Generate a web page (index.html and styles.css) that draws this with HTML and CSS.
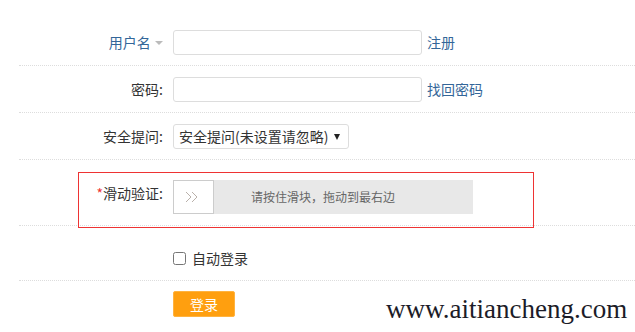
FILE: index.html
```html
<!DOCTYPE html>
<html lang="zh-CN">
<head>
    <meta charset="UTF-8">
    <meta name="viewport" content="width=device-width, initial-scale=1.0">
    <title>登录</title>
    <link rel="stylesheet" href="styles.css">
</head>
<body>

    <div class="login-form">
        <!-- 用户名 -->
        <div class="row">
            <div class="label label-link">用户名 <span class="caret"></span></div>
            <input type="text" class="text-input">
            <a class="side-link" href="#">注册</a>
        </div>

        <!-- 密码 -->
        <div class="row">
            <div class="label">密码:</div>
            <input type="password" class="text-input">
            <a class="side-link" href="#">找回密码</a>
        </div>

        <!-- 安全提问 -->
        <div class="row">
            <div class="label">安全提问:</div>
            <span class="select-wrap">
                <select class="select-input">
                    <option>安全提问(未设置请忽略)</option>
                </select>
            </span>
        </div>

        <!-- 滑动验证 -->
        <div class="row row-slide">
            <div class="label"><span class="required">*</span>滑动验证:</div>
            <div class="slider">
                <div class="slider-handle">
                    <svg width="14" height="12" viewBox="0 0 14 12">
                        <path d="M1 1 L6 6 L1 11 M7 1 L12 6 L7 11" fill="none" stroke="#b9b0aa" stroke-width="1"/>
                    </svg>
                </div>
                <div class="slider-text">请按住滑块，拖动到最右边</div>
            </div>
            <!-- error highlight -->
            <div class="error-box"></div>
        </div>

        <!-- 自动登录 -->
        <div class="row row-check">
            <div class="label"></div>
            <label class="check"><input type="checkbox"> 自动登录</label>
        </div>

        <!-- 登录按钮 -->
        <div class="row row-submit">
            <div class="label"></div>
            <button type="submit" class="btn-login">登录</button>
        </div>
    </div>

    <div class="watermark">www.aitiancheng.com</div>

</body>
</html>
```

FILE: styles.css
```css
* {
    margin: 0;
    padding: 0;
    box-sizing: border-box;
}

body {
    background: #fff;
    font-family: "Noto Sans CJK SC", "Liberation Sans", sans-serif;
    font-size: 14px;
    color: #333;
    width: 635px;
    height: 332px;
    overflow: hidden;
    position: relative;
}

.login-form {
    padding: 19px 0 0 19px;
}

/* each form line with a dotted separator */
.row {
    display: flex;
    align-items: center;
    height: 47px;
    border-bottom: 1px dotted #ddd;
    position: relative;
}

.label {
    width: 154px;
    padding-right: 10px;
    text-align: right;
    line-height: 20px;
    flex-shrink: 0;
}

.label-link {
    color: #336699;
    padding-right: 10px;
}

.caret {
    display: inline-block;
    width: 0;
    height: 0;
    border-left: 4px solid transparent;
    border-right: 4px solid transparent;
    border-top: 4px solid #bbb;
    vertical-align: middle;
    margin-left: 1px;
    margin-top: -3px;
}

.text-input {
    width: 249px;
    height: 25px;
    border: 1px solid #ddd;
    border-radius: 3px;
    padding: 0 5px;
    font-size: 14px;
    outline: none;
}

.side-link {
    margin-left: 5px;
    color: #336699;
    text-decoration: none;
    line-height: 20px;
}

.select-wrap {
    position: relative;
    display: inline-block;
}

.select-wrap::after {
    content: "";
    position: absolute;
    right: 9px;
    top: 10px;
    border-left: 3px solid transparent;
    border-right: 3px solid transparent;
    border-top: 6px solid #222;
    pointer-events: none;
}

.select-input {
    appearance: none;
    -webkit-appearance: none;
    width: 176px;
    height: 25px;
    border: 1px solid #ddd;
    border-radius: 3px;
    background: #fff;
    padding: 0 5px;
    font-family: "Noto Sans CJK SC", "Liberation Sans", sans-serif;
    font-size: 14px;
    color: #333;
    outline: none;
}

/* slide verification */
.row-slide {
    height: 66px;
    align-items: flex-start;
    padding-top: 20px;
}

.row-slide .label {
    padding-top: 3px;
}

.required {
    color: #e33;
}

.slider {
    width: 300px;
    height: 34px;
    background: #e8e8e8;
    display: flex;
    position: relative;
}

.slider-handle {
    width: 41px;
    height: 34px;
    background: #fff;
    border: 1px solid #ccc;
    display: flex;
    align-items: center;
    justify-content: center;
    padding-right: 4px;
    position: relative;
    z-index: 1;
}

.slider-text {
    position: absolute;
    left: 0;
    right: 0;
    top: 0;
    line-height: 34px;
    text-align: center;
    font-size: 12px;
    color: #666;
}

.error-box {
    position: absolute;
    left: 59px;
    top: 12px;
    width: 456px;
    height: 56px;
    border: 1px solid #e33;
    pointer-events: none;
}

.row-check {
    height: 55px;
    align-items: flex-start;
    padding-top: 22px;
}

.check {
    display: flex;
    align-items: center;
    line-height: 20px;
}

.check input {
    width: 13px;
    height: 13px;
    margin: 0 6px 0 0;
}

.row-submit {
    border-bottom: none;
    align-items: flex-start;
    padding-top: 10px;
}

.btn-login {
    width: 62px;
    height: 26px;
    background: #ff9f0f;
    border: 1px solid #ffb340;
    border-radius: 2px;
    color: #fff;
    font-family: "Noto Sans CJK SC", "Liberation Sans", sans-serif;
    font-size: 14px;
    cursor: pointer;
}

/* site watermark in the corner */
.watermark {
    position: absolute;
    left: 386px;
    top: 293px;
    font-family: "Liberation Serif", serif;
    font-size: 27px;
    line-height: 32px;
    color: #1c1c28;
}
```
